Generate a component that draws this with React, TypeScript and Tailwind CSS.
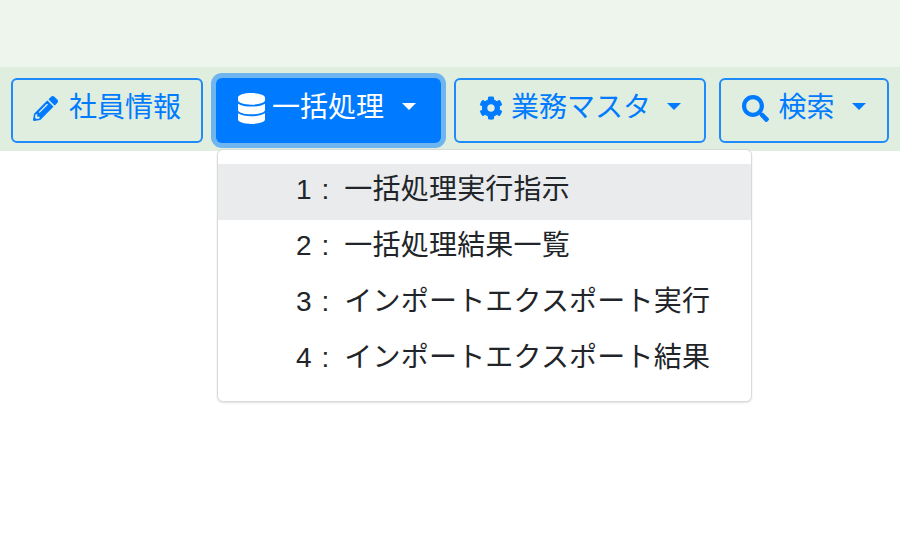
import React from 'react';
import { FaCog, FaDatabase, FaPencilAlt, FaSearch } from 'react-icons/fa';

const font = { fontFamily: '"Liberation Sans", "Noto Sans CJK JP", sans-serif' };

function Caret({ className = 'ml-[17px]' }: { className?: string }) {
  return <span className={`${className} mt-[-3px] h-0 w-0 border-x-[7px] border-t-[7px] border-x-transparent border-t-current`} />;
}

const menuItems = [
  { no: '1', label: '一括処理実行指示', active: true },
  { no: '2', label: '一括処理結果一覧' },
  { no: '3', label: 'インポートエクスポート実行' },
  { no: '4', label: 'インポートエクスポート結果' },
];

export default function App() {
  return (
    <div className="h-[548px] w-[900px] overflow-hidden bg-white text-[28px]" style={font}>
      <div className="h-[67px] bg-[#edf5ec]" />
      <div className="flex h-[84px] items-start gap-[13px] bg-[#dfeede] pl-[11px] pt-[11px]">
        <button className="flex h-[65px] w-[192px] items-center justify-center rounded-[6px] border-2 border-[#1f8afa] pb-[5px] text-[#007bff]">
          <FaPencilAlt className="mr-[11px] h-[25px] w-[25px]" />
          社員情報
        </button>
        <div className="relative">
          <button className="flex h-[65px] w-[225px] items-center justify-center rounded-[6px] bg-[#007bff] pb-[5px] pr-[3px] text-white shadow-[0_0_0_5px_rgba(0,123,255,0.5)]">
            <FaDatabase className="mr-[7px] h-[31px] w-[27px]" />
            一括処理
            <Caret className="ml-[18px]" />
          </button>
          <div className="absolute left-[1px] top-[71px] z-10 h-[253px] w-[535px] rounded-[6px] border border-[#d9dadb] bg-white py-[14px] text-[#212529] shadow-[0_1px_2px_rgba(0,0,0,0.12)]">
            {menuItems.map((item) => (
              <div
                key={item.no}
                className={`flex h-[56px] items-center pb-[5px] pl-[78px] ${item.active ? 'bg-[#e9ebed]' : ''}`}
              >
                <span>{item.no}</span>
                <span className="ml-[10px] mr-[15px]">:</span>
                <span className="tracking-[0.2px]">{item.label}</span>
              </div>
            ))}
          </div>
        </div>
        <button className="flex h-[65px] w-[252px] items-center justify-center rounded-[6px] border-2 border-[#1f8afa] pb-[5px] text-[#007bff]">
          <FaCog className="mr-[8px] h-[24px] w-[24px]" />
          業務マスタ
          <Caret className="ml-[16px]" />
        </button>
        <button className="flex h-[65px] w-[170px] items-center justify-center rounded-[6px] border-2 border-[#1f8afa] pb-[5px] text-[#007bff]">
          <FaSearch className="mr-[9px] h-[27px] w-[27px]" />
          検索
          <Caret />
        </button>
      </div>
    </div>
  );
}
